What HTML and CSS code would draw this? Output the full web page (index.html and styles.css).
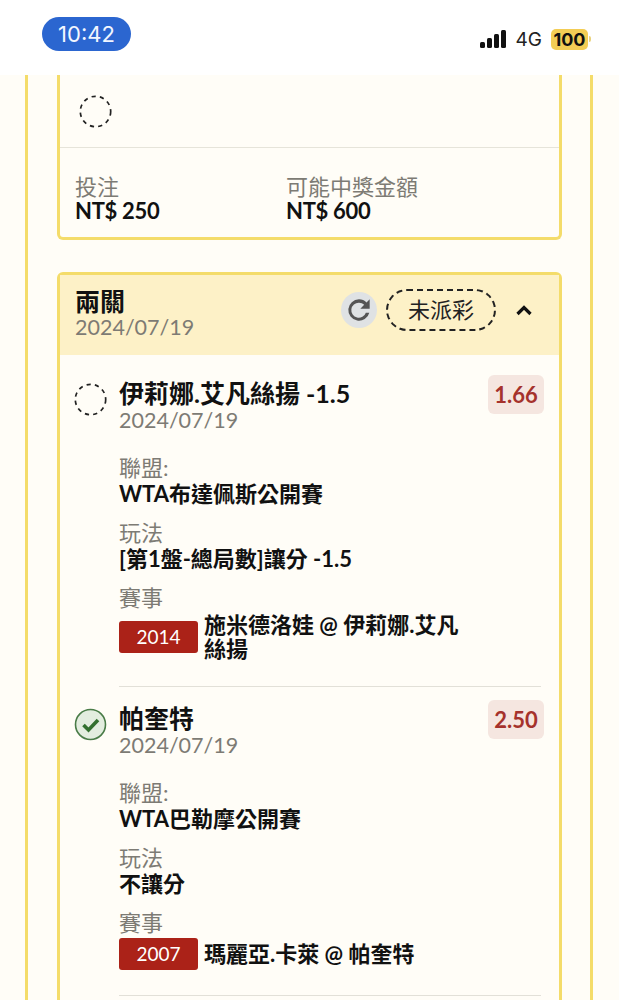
FILE: index.html
```html
<!DOCTYPE html>
<html lang="zh-Hant">
<head>
<meta charset="utf-8">
<title>投注紀錄</title>
<link rel="stylesheet" href="styles.css">
</head>
<body>
<header class="status">
  <div class="time">10:42</div>
  <div class="status-right">
    <svg class="signal" width="27" height="18" viewBox="0 0 27 18"><rect x="0" y="12" width="5" height="6" rx="1.5"/><rect x="7" y="8" width="5" height="10" rx="1.5"/><rect x="14" y="4" width="5" height="14" rx="1.5"/><rect x="21" y="0" width="5" height="18" rx="1.5"/></svg>
    <span class="net">4G</span>
    <span class="battery">100</span><span class="battery-tip"></span>
  </div>
</header>
<main class="outer">
  <section class="card card-cut">
    <div class="cut-row"><svg class="ring" width="33" height="33" viewBox="0 0 33 33"><circle cx="16.5" cy="16.5" r="15.2"/></svg></div>
    <div class="totals">
      <div class="total"><div class="label">投注</div><div class="amount">NT$ 250</div></div>
      <div class="total"><div class="label">可能中獎金額</div><div class="amount">NT$ 600</div></div>
    </div>
  </section>
  <section class="card card-open">
    <div class="card-head">
      <div class="head-text">
        <div class="head-title">兩關</div>
        <div class="date">2024/07/19</div>
      </div>
      <div class="head-actions">
        <span class="refresh"><svg width="32" height="32" viewBox="0 0 24 24"><path fill="#555" d="M17.65 6.35A7.96 7.96 0 0 0 12 4a8 8 0 1 0 7.73 10h-2.6A5.6 5.6 0 1 1 12 6.6c1.55 0 2.9.55 3.9 1.5L13 11h7V4z"/></svg></span>
        <span class="pill">未派彩</span>
        <svg class="chev" width="18" height="12" viewBox="0 0 18 12"><path d="M2.5 10 9 3.5l6.5 6.5" fill="none" stroke="#111" stroke-width="3.2"/></svg>
      </div>
    </div>
    <article class="leg">
      <svg class="ring" width="33" height="33" viewBox="0 0 33 33"><circle cx="16.5" cy="16.5" r="15.2"/></svg>
      <div class="leg-body">
        <div class="leg-top">
          <div><div class="leg-title">伊莉娜.艾凡絲揚 -1.5</div><div class="date">2024/07/19</div></div>
          <span class="odds">1.66</span>
        </div>
        <div class="field field-first"><div class="label">聯盟:</div><div class="value">WTA布達佩斯公開賽</div></div>
        <div class="field"><div class="label">玩法</div><div class="value">[第1盤-總局數]讓分 -1.5</div></div>
        <div class="field"><div class="label">賽事</div>
          <div class="match"><span class="code">2014</span><span class="value match-name">施米德洛娃 @ 伊莉娜.艾凡絲揚</span></div>
        </div>
      </div>
    </article>
    <article class="leg leg-next">
      <svg class="check" width="33" height="33" viewBox="0 0 33 33"><circle cx="16.5" cy="16.5" r="15" fill="#e3eddf" stroke="#4a7c48" stroke-width="1.6"/><path d="M9.5 17l5 5 9.5-10" fill="none" stroke="#33702f" stroke-width="3.6"/></svg>
      <div class="leg-body">
        <div class="leg-top">
          <div><div class="leg-title">帕奎特</div><div class="date">2024/07/19</div></div>
          <span class="odds">2.50</span>
        </div>
        <div class="field field-first"><div class="label">聯盟:</div><div class="value">WTA巴勒摩公開賽</div></div>
        <div class="field"><div class="label">玩法</div><div class="value">不讓分</div></div>
        <div class="field"><div class="label">賽事</div>
          <div class="match"><span class="code">2007</span><span class="value match-name">瑪麗亞.卡萊 @ 帕奎特</span></div>
        </div>
      </div>
    </article>
    <div class="leg-end"></div>
  </section>
</main>
</body>
</html>
```
FILE: styles.css
```css
* { box-sizing: border-box; }
html, body { margin: 0; height: 1000px; overflow: hidden; background: #fffdf7; }
body { font-family: Lato, "Noto Sans CJK TC", sans-serif; color: #111; }
.status { height: 75px; background: #fff; display: flex; justify-content: space-between; padding: 17px 28px 0 42px; }
.time { width: 89px; height: 34px; border-radius: 17px; background: #2b66d0; color: #f2f6ff; font: 400 22px/34px Inter, sans-serif; text-align: center; }
.status-right { display: flex; align-items: center; height: 44px; }
.signal { fill: #111; margin-right: 9px; }
.net { font: 400 19px Inter, sans-serif; margin-right: 9px; color: #222; }
.battery { width: 37px; height: 21px; border-radius: 5px; background: #f3cd55; font: 700 18px/21px Inter, sans-serif; text-align: center; }
.battery-tip { width: 2px; height: 6px; background: #e9d27e; margin-left: 1px; border-radius: 0 2px 2px 0; }
.outer { height: 925px; margin: 0 26px 0 25px; border-left: 3px solid #f4dc6a; border-right: 3px solid #f4dc6a; padding: 0 28px 0 29px; overflow: hidden; }
.card { border: 3px solid #f4dc6a; border-radius: 6px; background: #fffdf7; }
.card-cut { border-top: 0; border-radius: 0 0 6px 6px; height: 165px; margin-bottom: 32px; }
.card-open { min-height: 800px; }
.cut-row { height: 73px; padding: 20px 0 0 19px; border-bottom: 1px solid #e6e4da; }
.ring { display: block; flex: none; fill: none; stroke: #222; stroke-width: 1.7; stroke-dasharray: 4.2 4.2; }
.totals { display: flex; padding: 27px 0 0 15px; }
.total { width: 211px; }
.label { font-size: 22px; line-height: 24px; color: #7d7b74; }
.amount { font-size: 22px; line-height: 24px; font-weight: 700; color: #111; letter-spacing: -0.3px; }
.card-head { background: #fdf1c7; height: 80px; display: flex; justify-content: space-between; padding: 13px 26px 0 15px; }
.head-title { font-size: 25px; line-height: 27px; font-weight: 700; }
.date { font-size: 21.5px; line-height: 25px; color: #7d7b74; }
.head-actions { display: flex; align-items: center; height: 44px; }
.refresh { width: 36px; height: 36px; border-radius: 50%; background: #dfe2e4; display: flex; align-items: center; justify-content: center; margin-right: 9px; }
.pill { width: 110px; height: 42px; border-radius: 21px; border: 2px dashed #222; font-size: 22px; line-height: 38px; text-align: center; color: #222; margin-right: 19px; }
.chev { display: block; }
.leg { display: flex; padding: 20px 15px 0 14px; height: 331px; }
.leg-next { height: 309px; padding-top: 14px; position: relative; }
.check { flex: none; margin-top: 8px; }
.leg-body { flex: 1; margin-left: 12px; min-width: 0; }
.leg > .ring { margin-top: 8px; }
.leg-top { display: flex; justify-content: space-between; align-items: flex-start; }
.leg-title { font-size: 25px; line-height: 30px; font-weight: 700; margin-top: 3px; }
.odds { width: 56px; height: 39px; border-radius: 6px; background: #f5e6e0; color: #a5322c; font-size: 22px; font-weight: 700; line-height: 39px; text-align: center; }
.field { margin-top: 14px; }
.field-first { margin-top: 23px; }
.label + .value { margin-top: 0; }
.value { font-size: 22px; line-height: 27px; font-weight: 700; color: #111; }
.match { display: flex; align-items: center; margin-top: 3px; }
.code { flex: none; width: 79px; height: 32px; border-radius: 3px; background: #ab2218; color: #fff; font-size: 19px; font-weight: 400; line-height: 32px; text-align: center; margin-right: 6px; }
.match-name { width: 262px; line-height: 24px; }
.leg-next::before { content: ""; position: absolute; top: 0; left: 59px; right: 18px; height: 1px; background: #e2e0d8; }
.leg-end { height: 1px; margin: 0 18px 0 59px; background: #e2e0d8; }
```
